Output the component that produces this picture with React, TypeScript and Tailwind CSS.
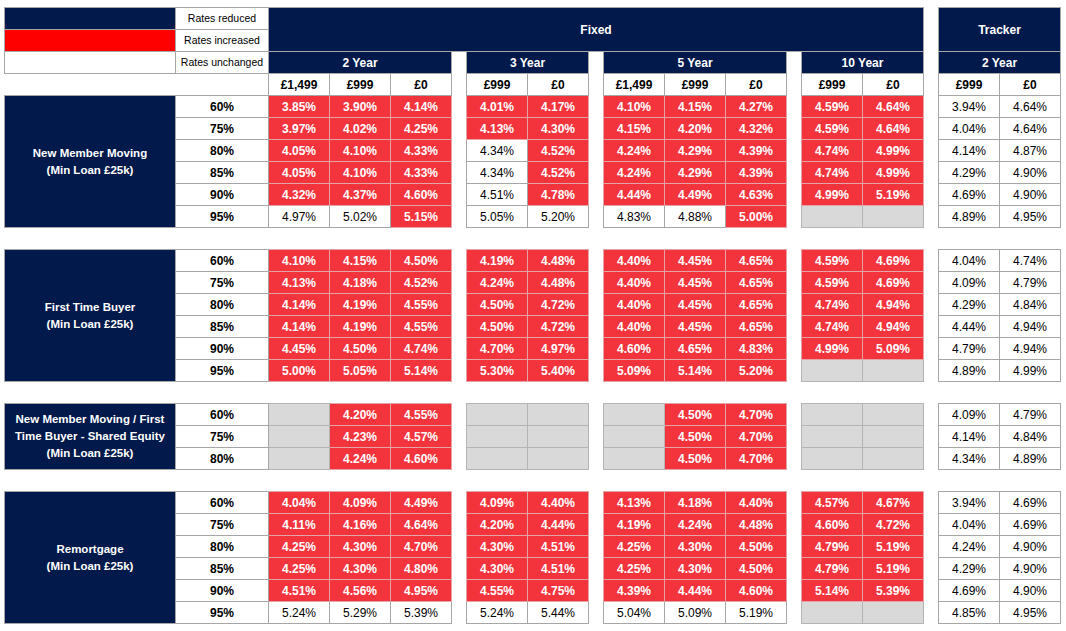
import React from 'react';

type Row = { ltv: string; fixed: string; tracker: string };
type Section = { title: string[]; rows: Row[] };

// fixed: 2Y(3) 3Y(2) 5Y(3) 10Y(2); "w" = unchanged (white), "-" = not offered
const sections: Section[] = [
  {
    title: ['New Member Moving', '(Min Loan £25k)'],
    rows: [
      { ltv: '60%', fixed: '3.85 3.90 4.14 4.01 4.17 4.10 4.15 4.27 4.59 4.64', tracker: '3.94 4.64' },
      { ltv: '75%', fixed: '3.97 4.02 4.25 4.13 4.30 4.15 4.20 4.32 4.59 4.64', tracker: '4.04 4.64' },
      { ltv: '80%', fixed: '4.05 4.10 4.33 w4.34 4.52 4.24 4.29 4.39 4.74 4.99', tracker: '4.14 4.87' },
      { ltv: '85%', fixed: '4.05 4.10 4.33 w4.34 4.52 4.24 4.29 4.39 4.74 4.99', tracker: '4.29 4.90' },
      { ltv: '90%', fixed: '4.32 4.37 4.60 w4.51 4.78 4.44 4.49 4.63 4.99 5.19', tracker: '4.69 4.90' },
      { ltv: '95%', fixed: 'w4.97 w5.02 5.15 w5.05 w5.20 w4.83 w4.88 5.00 - -', tracker: '4.89 4.95' },
    ],
  },
  {
    title: ['First Time Buyer', '(Min Loan £25k)'],
    rows: [
      { ltv: '60%', fixed: '4.10 4.15 4.50 4.19 4.48 4.40 4.45 4.65 4.59 4.69', tracker: '4.04 4.74' },
      { ltv: '75%', fixed: '4.13 4.18 4.52 4.24 4.48 4.40 4.45 4.65 4.59 4.69', tracker: '4.09 4.79' },
      { ltv: '80%', fixed: '4.14 4.19 4.55 4.50 4.72 4.40 4.45 4.65 4.74 4.94', tracker: '4.29 4.84' },
      { ltv: '85%', fixed: '4.14 4.19 4.55 4.50 4.72 4.40 4.45 4.65 4.74 4.94', tracker: '4.44 4.94' },
      { ltv: '90%', fixed: '4.45 4.50 4.74 4.70 4.97 4.60 4.65 4.83 4.99 5.09', tracker: '4.79 4.94' },
      { ltv: '95%', fixed: '5.00 5.05 5.14 5.30 5.40 5.09 5.14 5.20 - -', tracker: '4.89 4.99' },
    ],
  },
  {
    title: ['New Member Moving / First', 'Time Buyer - Shared Equity', '(Min Loan £25k)'],
    rows: [
      { ltv: '60%', fixed: '- 4.20 4.55 - - - 4.50 4.70 - -', tracker: '4.09 4.79' },
      { ltv: '75%', fixed: '- 4.23 4.57 - - - 4.50 4.70 - -', tracker: '4.14 4.84' },
      { ltv: '80%', fixed: '- 4.24 4.60 - - - 4.50 4.70 - -', tracker: '4.34 4.89' },
    ],
  },
  {
    title: ['Remortgage', '(Min Loan £25k)'],
    rows: [
      { ltv: '60%', fixed: '4.04 4.09 4.49 4.09 4.40 4.13 4.18 4.40 4.57 4.67', tracker: '3.94 4.69' },
      { ltv: '75%', fixed: '4.11 4.16 4.64 4.20 4.44 4.19 4.24 4.48 4.60 4.72', tracker: '4.04 4.69' },
      { ltv: '80%', fixed: '4.25 4.30 4.70 4.30 4.51 4.25 4.30 4.50 4.79 5.19', tracker: '4.24 4.90' },
      { ltv: '85%', fixed: '4.25 4.30 4.80 4.30 4.51 4.25 4.30 4.50 4.79 5.19', tracker: '4.29 4.90' },
      { ltv: '90%', fixed: '4.51 4.56 4.95 4.55 4.75 4.39 4.44 4.60 5.14 5.39', tracker: '4.69 4.90' },
      { ltv: '95%', fixed: 'w5.24 w5.29 w5.39 w5.24 w5.44 w5.04 w5.09 w5.19 - -', tracker: '4.85 4.95' },
    ],
  },
];

const groups = [3, 2, 3, 2];
const prices = [['£1,499', '£999', '£0'], ['£999', '£0'], ['£1,499', '£999', '£0'], ['£999', '£0']];

const Gap = () => <td className="p-0" />;

const RateCell = ({ v }: { v: string }) => {
  if (v === '-') return <td className="border border-[#b4b4b4] bg-[#d9d9d9] p-0" />;
  if (v.startsWith('w'))
    return <td className="border border-[#a6a6a6] bg-white p-0 text-center text-black">{v.slice(1)}%</td>;
  return <td className="border border-[#e4a3a6] bg-[#f4343d] p-0 text-center font-bold text-white">{v}%</td>;
};

function splitGroups<T>(items: T[]): T[][] {
  const out: T[][] = [];
  let i = 0;
  for (const n of groups) {
    out.push(items.slice(i, i + n));
    i += n;
  }
  return out;
}

const SectionRows = ({ section }: { section: Section }) => (
  <>
    {section.rows.map((row, i) => {
      const fixed = splitGroups(row.fixed.split(' '));
      return (
        <tr key={row.ltv} className="h-[22px]">
          {i === 0 && (
            <td
              rowSpan={section.rows.length}
              className="border border-[#a6a6a6] bg-[#02194b] p-0 text-center text-[11.5px] font-bold leading-[17px] text-white"
            >
              {section.title.map((t) => (
                <div key={t}>{t}</div>
              ))}
            </td>
          )}
          <td className="border border-[#a6a6a6] bg-white p-0 text-center font-bold">{row.ltv}</td>
          {fixed.map((g, gi) => (
            <React.Fragment key={gi}>
              {g.map((v, vi) => (
                <RateCell key={vi} v={v} />
              ))}
              <Gap />
            </React.Fragment>
          ))}
          {row.tracker.split(' ').map((v, vi) => (
            <RateCell key={vi} v={'w' + v} />
          ))}
        </tr>
      );
    })}
  </>
);

const Spacer = () => (
  <tr className="h-[22px]">
    <td colSpan={18} className="p-0" />
  </tr>
);

const App: React.FC = () => {
  const cols = [171, 93, 61, 61, 61, 15, 61, 61, 15, 61, 61, 61, 15, 61, 61, 15, 61, 61];
  const head = 'border border-[#a6a6a6] bg-[#02194b] p-0 text-center font-bold text-white';
  const legend = 'border border-[#a6a6a6] bg-white p-0 text-center text-[10.5px] text-black';
  const price = 'border border-[#a6a6a6] bg-white p-0 text-center font-bold text-black';

  return (
    <div className="min-h-screen bg-white pl-1 pt-[7px] font-['Liberation_Sans',Arial,sans-serif] text-[12px] text-black">
      <table className="table-fixed border-collapse">
        <colgroup>
          {cols.map((w, i) => (
            <col key={i} style={{ width: w }} />
          ))}
        </colgroup>
        <tbody>
          <tr className="h-[22px]">
            <td className="border border-[#a6a6a6] bg-[#02194b] p-0" />
            <td className={legend}>Rates reduced</td>
            <td colSpan={13} rowSpan={2} className={head}>
              Fixed
            </td>
            <td rowSpan={2} className="p-0" />
            <td colSpan={2} rowSpan={2} className={head}>
              Tracker
            </td>
          </tr>
          <tr className="h-[22px]">
            <td className="border border-[#a6a6a6] bg-[#ff0000] p-0" />
            <td className={legend}>Rates increased</td>
          </tr>
          <tr className="h-[22px]">
            <td className="border border-[#a6a6a6] bg-white p-0" />
            <td className={legend}>Rates unchanged</td>
            <td colSpan={3} className={head}>2 Year</td>
            <Gap />
            <td colSpan={2} className={head}>3 Year</td>
            <Gap />
            <td colSpan={3} className={head}>5 Year</td>
            <Gap />
            <td colSpan={2} className={head}>10 Year</td>
            <Gap />
            <td colSpan={2} className={head}>2 Year</td>
          </tr>
          <tr className="h-[22px]">
            <td colSpan={2} className="p-0" />
            {prices.map((g, gi) => (
              <React.Fragment key={gi}>
                {g.map((p, pi) => (
                  <td key={pi} className={price}>
                    {p}
                  </td>
                ))}
                <Gap />
              </React.Fragment>
            ))}
            <td className={price}>£999</td>
            <td className={price}>£0</td>
          </tr>
          {sections.map((s, si) => (
            <React.Fragment key={si}>
              {si > 0 && <Spacer />}
              <SectionRows section={s} />
            </React.Fragment>
          ))}
        </tbody>
      </table>
    </div>
  );
};

export default App;
